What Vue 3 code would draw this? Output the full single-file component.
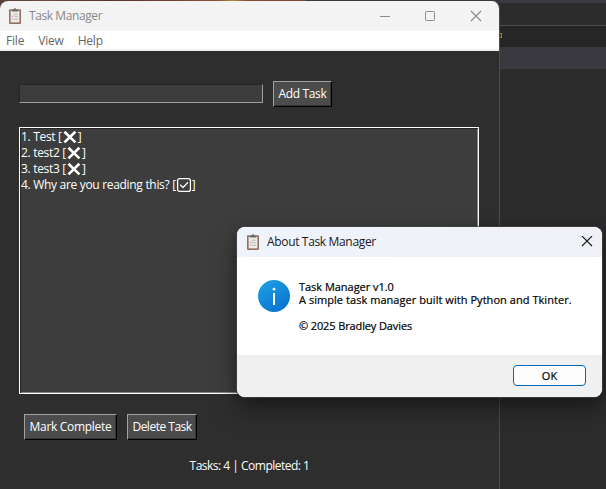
<script setup>
const menus = ['File', 'View', 'Help']
const tasks = [
  { id: 1, name: 'Test', done: false },
  { id: 2, name: 'test2', done: false },
  { id: 3, name: 'test3', done: false },
  { id: 4, name: 'Why are you reading this?', done: true },
]
const completed = tasks.filter((t) => t.done).length
</script>

<template>
  <div class="desktop">
    <div class="editor">
      <div class="ed-top"></div>
      <div class="ed-tabs"></div>
      <div class="ed-crumbs"><i class="marker"></i></div>
      <div class="ed-line"></div>
    </div>
    <div class="wallpaper"></div>

    <section class="window">
      <header class="titlebar">
        <svg class="clip" width="14" height="17" viewBox="0 0 14 17">
          <rect x="1" y="1.2" width="12" height="14.8" rx="1" fill="#94705f" />
          <rect x="2.6" y="2.8" width="8.8" height="11.6" fill="#ecebea" />
          <path d="M3.8 3.4V1.8h1.7a1.5 1.5 0 0 1 3 0h1.7v1.6z" fill="#656d6f" />
          <path d="M6.3 6.2h3.5M6.3 8.8h3.5M6.3 11.4h3.5" stroke="#aaa" stroke-width=".8" />
          <path d="M3.6 8.3l.8.7 1.2-1.6M3.6 11l.8.7 1-1.2" stroke="#c98482" stroke-width=".7" fill="none" />
        </svg>
        <span class="title">Task Manager</span>
        <svg class="controls" width="104" height="12" viewBox="0 0 104 12">
          <path d="M0 6.5h10" stroke="#8b8b8b" />
          <rect x="45.5" y="1.5" width="9" height="9" rx="1" fill="none" stroke="#8b8b8b" />
          <path d="M91 1l10 10M101 1L91 11" stroke="#8b8b8b" stroke-width="1.1" />
        </svg>
      </header>
      <nav class="menubar"><span v-for="m in menus" :key="m">{{ m }}</span></nav>
      <main class="body">
        <div class="entry-row">
          <div class="entry"></div>
          <button class="btn add"><span>Add Task</span></button>
        </div>
        <div class="list">
          <div v-for="t in tasks" :key="t.id" class="task">
            <span>{{ t.id }}. {{ t.name }} [</span>
            <svg v-if="t.done" class="mark" width="16" height="16" viewBox="0 0 16 16">
              <rect x="1.6" y="1.6" width="12.8" height="12.8" rx="2" fill="none" stroke="#fff" stroke-width="1.3" />
              <path d="M4.2 7.8l2.8 2.7 5-5.2" fill="none" stroke="#fff" stroke-width="1.3" />
            </svg>
            <svg v-else class="mark" width="16" height="16" viewBox="0 0 16 16">
              <path d="M2.4 2.8l11 10.6M13.4 2.8L2.4 13.4" stroke="#fff" stroke-width="2.6" />
            </svg>
            <span>]</span>
          </div>
        </div>
        <div class="actions">
          <button class="btn complete"><span>Mark Complete</span></button>
          <button class="btn delete"><span>Delete Task</span></button>
        </div>
        <div class="status"><span>Tasks: {{ tasks.length }} | Completed: {{ completed }}</span></div>
      </main>
    </section>

    <section class="dialog">
      <header class="dlg-title">
        <svg class="clip" width="14" height="17" viewBox="0 0 14 17">
          <rect x="1" y="1.2" width="12" height="14.8" rx="1" fill="#94705f" />
          <rect x="2.6" y="2.8" width="8.8" height="11.6" fill="#ecebea" />
          <path d="M3.8 3.4V1.8h1.7a1.5 1.5 0 0 1 3 0h1.7v1.6z" fill="#656d6f" />
          <path d="M6.3 6.2h3.5M6.3 8.8h3.5M6.3 11.4h3.5" stroke="#aaa" stroke-width=".8" />
          <path d="M3.6 8.3l.8.7 1.2-1.6M3.6 11l.8.7 1-1.2" stroke="#c98482" stroke-width=".7" fill="none" />
        </svg>
        <span class="about">About Task Manager</span>
        <svg class="dlg-close" width="12" height="12" viewBox="0 0 12 12">
          <path d="M1 0l10 10M11 0L1 10" stroke="#191919" stroke-width="1.1" />
        </svg>
      </header>
      <div class="dlg-body">
        <svg width="32" height="32" viewBox="0 0 32 32">
          <defs>
            <linearGradient id="info" x1="0.2" y1="0" x2="0.8" y2="1">
              <stop offset="0" stop-color="#209fe3" />
              <stop offset="1" stop-color="#0570d0" />
            </linearGradient>
          </defs>
          <circle cx="16" cy="16" r="16" fill="url(#info)" />
          <circle cx="16" cy="9.2" r="1.4" fill="#fff" />
          <path d="M16 13v12" stroke="#fff" stroke-width="2" />
        </svg>
        <div class="message">
          <p class="m1">Task Manager v1.0</p>
          <p class="m2">A simple task manager built with Python and Tkinter.</p>
          <p class="m3">© 2025 Bradley Davies</p>
        </div>
      </div>
      <footer class="dlg-foot"><button class="ok">OK</button></footer>
    </section>
  </div>
</template>

<style>
body { margin: 0; overflow: hidden; }
</style>

<style scoped>
* { box-sizing: border-box; }
.desktop {
  position: relative; width: 606px; height: 489px; overflow: hidden; background: #2c2c2c;
  font-family: "Open Sans", "Noto Sans", sans-serif; font-size: 12px; line-height: 16px; white-space: nowrap;
}
svg { display: block; flex: none; }
.editor { position: absolute; inset: 0; }
.ed-top { height: 3px; background: #3a393f; }
.ed-tabs { height: 23px; background: #2c2c2c; border-bottom: 1px solid #4c4c4c; }
.ed-crumbs { height: 21px; background: #262626; padding: 7px 0 0 498px; }
.marker { display: block; width: 4px; height: 5px; border: 1px solid #c8741c; }
.ed-line { height: 22px; background: #3a393f; }
.wallpaper {
  position: absolute; left: 0; top: 0; width: 306px; height: 8px;
  background: linear-gradient(90deg, #5b4037, #6b4d3f 15%, #59322d 35%, #744634 60%, #8b5635 72%, #ad8c3b 76%, #804a35 81%, #7c4735);
}
.window {
  position: absolute; left: 0; top: 1px; width: 500px; height: 488px; display: flex; flex-direction: column;
  background: #2e2e2e; border-right: 1px solid #4b4b4b; border-radius: 8px 8px 0 0; overflow: hidden;
}
.titlebar { height: 30px; background: #f3f3f3; display: flex; align-items: center; padding-left: 8px; color: #8a8a8a; }
.title { margin-left: 7px; letter-spacing: -.41px; }
.controls { margin-left: auto; margin-right: 15px; }
.menubar { height: 20px; background: #fff; border-bottom: 2px solid #f0f0f0; display: flex; gap: 14px; padding: 2px 0 0 6px; color: #666; letter-spacing: -.2px; }
.body { flex: 1; display: flex; flex-direction: column; color: #fff; }
.entry-row { display: flex; align-items: flex-start; padding: 30px 0 0 19px; gap: 10px; height: 76px; }
.entry { width: 244px; height: 19px; margin-top: 3px; background: #3d3d3d; border: 1px solid; border-color: #252525 #a0a0a0 #a0a0a0 #252525; }
.btn {
  font: inherit; color: #fff; background: #4c4c4c; height: 27px; padding: 0; margin: 0; border-radius: 0;
  border: 1px solid; border-color: #a2a2a2 #000 #000 #a2a2a2; box-shadow: inset -1px -1px #353535;
  display: flex; align-items: center; justify-content: center;
}
.add { width: 59px; letter-spacing: -.35px; height: 26px; }
.list {
  margin-left: 19px; width: 460px; height: 267px; background: #3d3d3d; padding: 1px 0 0 1px;
  border: 1px solid #fff; box-shadow: inset 1px 1px #252525, inset -1px -1px #858585;
}
.task { height: 16px; display: flex; align-items: center; letter-spacing: -.31px; }
.actions { display: flex; gap: 10px; padding: 20px 0 0 24px; height: 46px; }
.actions .btn { height: 26px; }
.complete { width: 93px; letter-spacing: -.3px; }
.delete { width: 70px; letter-spacing: -.5px; }
.status { width: 499px; text-align: center; margin-top: 18px; letter-spacing: -.5px; }
.dialog {
  position: absolute; left: 237px; top: 227px; width: 365px; height: 170px; display: flex; flex-direction: column;
  background: #fff; border-radius: 8px; color: #000; overflow: hidden;
  box-shadow: 0 0 0 1px rgba(70, 70, 70, .7), 0 12px 26px rgba(0, 0, 0, .38), 0 2px 12px rgba(0, 0, 0, .2);
}
.dlg-title { height: 30px; background: linear-gradient(90deg, #eff3fc, #f0f1f6); display: flex; align-items: center; padding: 0 9px; color: #191919; }
.about { margin-left: 7px; letter-spacing: -.34px; }
.dlg-close { margin-left: auto; }
.dlg-body { flex: 1; display: flex; gap: 9px; padding: 23px 0 0 21px; font-size: 11px; line-height: 13px; }
.message { -webkit-text-stroke: .2px #000; }
.message p { margin: 0; }
.message .m1 { letter-spacing: -.03px; }
.message .m2 { letter-spacing: .05px; }
.message .m3 { margin-top: 13px; letter-spacing: -.12px; }
.dlg-foot { height: 42px; background: #f0f0f0; display: flex; justify-content: flex-end; padding: 10px 16px 0 0; }
.ok { width: 73px; height: 21px; padding: 0; font: inherit; font-size: 11px; line-height: 13px; color: #000; background: #fdfdfd; border: 1px solid #0067c0; border-radius: 4px; -webkit-text-stroke: .2px #000; }
</style>
